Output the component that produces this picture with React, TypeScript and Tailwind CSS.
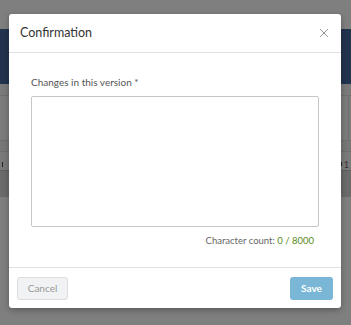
import React from 'react';

const font = { fontFamily: 'Lato, "Open Sans", sans-serif' };

const App: React.FC = () => {
  return (
    <div className="relative w-[351px] h-[325px] overflow-hidden bg-[#7f7f7f]" style={font}>
      {/* dimmed page behind the dialog */}
      <div className="flex flex-col">
        <div className="h-[29px]" />
        <div className="h-[55px] bg-[#22344d]" />
        <div className="h-[12px] bg-[#7a7a7a] border-b border-[#6e6e6e]" />
        <div className="h-[45px] bg-[#7c7c7c] border-b border-[#6e6e6e] flex justify-end">
          <div className="w-[3px] border-l border-[#6e6e6e]" />
        </div>
        <div className="h-[11px] bg-[#777777] border-b border-[#6e6e6e]" />
        <div className="h-[6px] bg-[#7a7a7a]" />
        <div className="h-[12px] bg-[#7a7a7a] flex items-center justify-between px-[2px] text-[9px] text-[#333]">
          <span className="w-[1px] h-[5px] bg-[#222]" />
          <span className="flex items-center gap-[2px]"><span className="w-[1px] h-[4px] bg-[#222]" /><span className="leading-none">1</span></span>
        </div>
        <div className="h-[27px] bg-[#6b6b6b] border-t border-[#5e5e5e]" />
      </div>

      {/* dialog */}
      <div className="absolute left-[9px] top-[14px] w-[332px] bg-white rounded-[3px] shadow-[0_2px_6px_rgba(0,0,0,0.3)] flex flex-col">
        <div className="h-[39px] flex items-center justify-between pl-[11px] pr-[12px] border-b border-[#dde1e6]">
          <span className="text-[12.5px] text-[#333]">Confirmation</span>
          <svg width="10" height="10" viewBox="0 0 10 10" className="text-[#999]">
            <path d="M1 1 L9 9 M9 1 L1 9" stroke="currentColor" strokeWidth="1" />
          </svg>
        </div>

        <div className="pt-[22px] px-[22px] pb-[19px] flex flex-col">
          <label className="text-[10px] text-[#555] leading-[14px]">Changes in this version *</label>
          <textarea className="mt-[7px] w-[288px] h-[131px] border border-[#c6c6c6] rounded-[2px] resize-none outline-none" />
          <div className="mt-[7px] pr-[5px] text-right text-[9.5px] leading-[14px] text-[#666]">
            Character count: <span className="text-[#5b8a1c]">0 / 8000</span>
          </div>
        </div>

        <div className="h-[41px] border-t border-[#dde1e6] flex items-center justify-between px-[8px]">
          <button className="w-[51px] h-[23px] rounded-[3px] border border-[#dcdde0] bg-[#f1f2f4] text-[10px] text-[#999]">
            Cancel
          </button>
          <button className="w-[43px] h-[23px] rounded-[3px] bg-[#7ab6d6] text-[10px] font-bold text-white">
            Save
          </button>
        </div>
      </div>
    </div>
  );
};

export default App;
